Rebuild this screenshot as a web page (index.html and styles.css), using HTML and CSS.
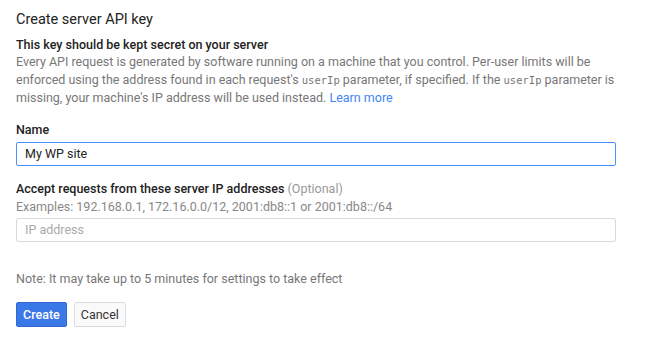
FILE: index.html
```html
<!DOCTYPE html>
<html lang="en">
<head>
  <meta charset="UTF-8" />
  <title>Create server API key</title>
  <link rel="stylesheet" href="styles.css">
</head>
<body>
  <div class="panel">
    <h1>Create server API key</h1>

    <div class="intro">
      <h2>This key should be kept secret on your server</h2>
      <p>Every API request is generated by software running on a machine that you control. Per-user limits will be<br>
        enforced using the address found in each request's <code>userIp</code> parameter, if specified. If the <code>userIp</code> parameter is<br>
        missing, your machine's IP address will be used instead. <a href="#">Learn more</a></p>
    </div>

    <div class="field">
      <label for="keyName">Name</label>
      <input type="text" id="keyName" class="focused" value="My WP site">
    </div>

    <div class="field">
      <label for="ipList">Accept requests from these server IP addresses <span class="optional">(Optional)</span></label>
      <div class="hint">Examples: 192.168.0.1, 172.16.0.0/12, 2001:db8::1 or 2001:db8::/64</div>
      <input type="text" id="ipList" placeholder="IP address">
    </div>

    <p class="note">Note: It may take up to 5 minutes for settings to take effect</p>

    <div class="actions">
      <button type="button" class="btn primary">Create</button>
      <button type="button" class="btn">Cancel</button>
    </div>
  </div>
</body>
</html>
```

FILE: styles.css
```css
body {
  margin: 0;
  background: #fff;
  font-family: Roboto, 'Liberation Sans', sans-serif;
  font-size: 12.5px;
  color: #222;
}

.panel {
  width: 600px;
  padding: 9px 16px 0;
}

h1 {
  margin: 0;
  font-size: 14.5px;
  font-weight: 400;
  line-height: 22px;
  color: #222;
}

.intro {
  margin-top: 6px;
}

h2 {
  margin: 0;
  font-size: 12.5px;
  font-weight: 500;
  line-height: 16px;
  color: #222;
}

.intro p {
  margin: 0;
  line-height: 17.5px;
  color: #777;
}

code {
  font-family: 'DejaVu Sans Mono', monospace;
  font-size: 10.5px;
  color: #777;
}

a {
  color: #4285f4;
  text-decoration: none;
}

.field {
  margin-top: 14px;
}

label {
  display: block;
  font-weight: 500;
  line-height: 18px;
  color: #222;
}

.optional {
  font-weight: 400;
  color: #999;
}

.hint {
  margin-bottom: 2px;
  line-height: 17px;
  color: #888;
}

input {
  display: block;
  box-sizing: border-box;
  width: 600px;
  height: 24px;
  margin-top: 3px;
  padding: 0 8px;
  border: 1px solid #d9d9d9;
  border-radius: 2px;
  font-family: Roboto, 'Liberation Sans', sans-serif;
  font-size: 12.5px;
  color: #222;
  outline: none;
}

input.focused {
  border-color: #4d90fe;
}

input::placeholder {
  color: #aaa;
}

.note {
  margin: 28px 0 0;
  line-height: 17px;
  color: #777;
}

.actions {
  display: flex;
  gap: 7px;
  margin-top: 15px;
}

.btn {
  height: 25px;
  padding: 0 6px;
  border: 1px solid #dcdcdc;
  border-radius: 2px;
  background: #fafafa;
  font-family: Roboto, 'Liberation Sans', sans-serif;
  font-size: 12.5px;
  color: #333;
}

.btn.primary {
  border-color: #3367d6;
  background: #3b78e7;
  color: #fff;
  font-weight: 500;
}
```
